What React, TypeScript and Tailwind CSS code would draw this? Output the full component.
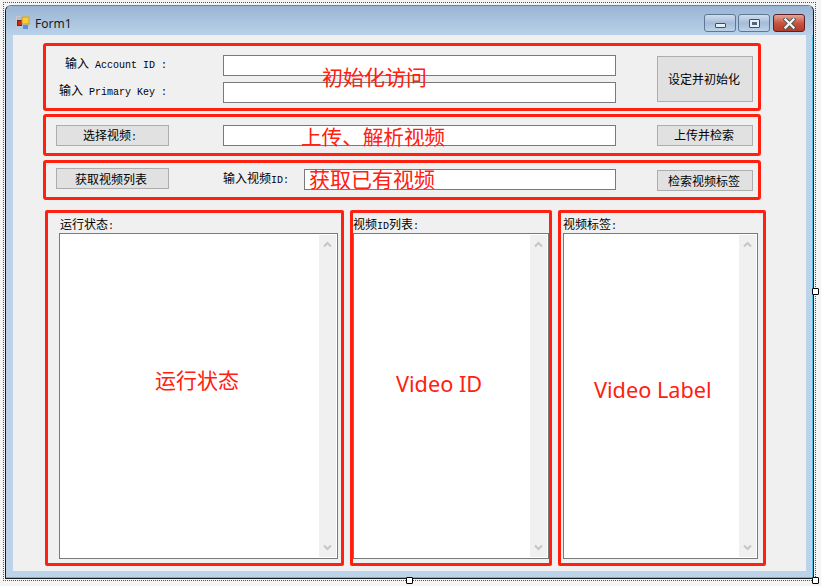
import type { ReactNode } from "react";

const uiFont = { fontFamily: '"Liberation Mono", "Noto Sans CJK SC", monospace' };

const Latin = ({ children }: { children: string }) => (
  <span className="text-[10px] whitespace-pre">{children}</span>
);

const Btn = ({ className, children }: { className: string; children: ReactNode }) => (
  <div className={`flex items-center justify-center bg-[#e1e1e1] border border-[#adadad] pt-[4px] text-[12px] text-black ${className}`}>
    {children}
  </div>
);

const Input = ({ className }: { className: string }) => (
  <div className={`bg-white border border-[#7a7a7a] ${className}`} />
);

const Chevron = ({ up }: { up?: boolean }) => (
  <svg width="9" height="7" viewBox="0 0 9 7" className="text-[#c6c6c6]">
    <path d={up ? "M1 5.5 L4.5 2 L8 5.5" : "M1 1.5 L4.5 5 L8 1.5"} fill="none" stroke="currentColor" strokeWidth="2" />
  </svg>
);

const ListBox = ({ className }: { className: string }) => (
  <div className={`flex justify-end bg-white border border-[#7a7a7a] h-[326px] py-px pr-px ${className}`}>
    <div className="flex flex-col items-center justify-between w-[17px] bg-[#f0f0f0] py-[6px]">
      <Chevron up />
      <Chevron />
    </div>
  </div>
);

const Panel = ({ title, className, titleClass, boxClass }: { title: ReactNode; className: string; titleClass?: string; boxClass: string }) => (
  <div className={`border-[3px] border-[#ff2010] rounded-[2px] h-[356px] ${className}`}>
    <div className={`h-[20px] pt-[5px] text-[12px] leading-[16px] text-black ${titleClass ?? ""}`}>{title}</div>
    <ListBox className={boxClass} />
  </div>
);

const CaptionBtn = ({ className, children }: { className: string; children: ReactNode }) => (
  <div className={`flex items-center justify-center h-[18px] w-[32px] rounded-[3px] border ${className}`}>
    {children}
  </div>
);

const Note = ({ className, children }: { className: string; children: string }) => (
  <div className={`absolute text-[#ff2010] whitespace-nowrap leading-none ${className}`} style={{ fontFamily: '"Noto Sans", "Noto Sans CJK SC", sans-serif' }}>
    {children}
  </div>
);

const Handle = ({ className }: { className: string }) => (
  <div className={`absolute w-[7px] h-[7px] bg-white border border-black rounded-[1px] ${className}`} />
);

export default function App() {
  return (
    <div className="relative w-[821px] h-[586px] bg-[#f4f4f4] pl-[5px] pt-[5px] overflow-hidden" style={uiFont}>
      {/* window */}
      <div className="flex flex-col w-[809px] h-[574px] border border-[#1c1c1c] border-t-[#6b7f96] rounded-t-[6px] bg-[#bcd3ea] shadow-[inset_-1px_-1px_0_#4cc3e8]">
        <div className="flex items-start justify-between h-[29px] rounded-t-[6px] bg-gradient-to-b from-[#9ab5d3] to-[#b9d2ea] pl-[10px] pr-[8px] pt-[8px]">
          <div className="flex items-center gap-[5px] h-[18px]">
            <svg width="14" height="14" viewBox="0 0 14 14">
              <rect x="0.5" y="0.5" width="13" height="13" fill="none" stroke="#c8c8c8" />
              <rect x="1.5" y="4.5" width="4" height="5" fill="#c22a22" stroke="#7a2020" />
              <rect x="6" y="1" width="7" height="7" fill="#f6cf3c" stroke="#c79a2a" />
              <rect x="7" y="9" width="5" height="4" fill="#5c8fe0" />
            </svg>
            <span className="pt-px text-[12px] text-[#1a1a1a]" style={{ fontFamily: '"Noto Sans", sans-serif' }}>Form1</span>
          </div>
          <div className="flex">
            <CaptionBtn className="border-[#5f7894] bg-gradient-to-b from-[#cfdeee] via-[#a4bcd8] to-[#bcd2e8]">
              <div className="w-[11px] h-[5px] mt-[4px] bg-[#e8eef5] border border-[#3f4f63] rounded-[1px]" />
            </CaptionBtn>
            <CaptionBtn className="ml-[2px] border-[#5f7894] bg-gradient-to-b from-[#cfdeee] via-[#a4bcd8] to-[#bcd2e8]">
              <div className="w-[11px] h-[9px] bg-[#e8eef5] border border-[#3f4f63] rounded-[1px] flex items-center justify-center">
                <div className="w-[5px] h-[3px] bg-[#51667f]" />
              </div>
            </CaptionBtn>
            <CaptionBtn className="ml-[3px] border-[#5c1f28] bg-gradient-to-b from-[#e3a598] via-[#c9543f] to-[#b23a2a]">
              <svg width="13" height="11" viewBox="0 0 13 11">
                <path d="M2.5 1.5 L10.5 9.5 M10.5 1.5 L2.5 9.5" stroke="#4a4a4a" strokeWidth="4" strokeLinecap="square" />
                <path d="M2.5 1.5 L10.5 9.5 M10.5 1.5 L2.5 9.5" stroke="#f4f4f4" strokeWidth="2.4" strokeLinecap="square" />
              </svg>
            </CaptionBtn>
          </div>
        </div>

        {/* client area */}
        <div className="ml-[7px] w-[793px] h-[536px] bg-[#f0f0f0] pt-[8px] pl-[30px]">
          <div className="flex w-[718px] h-[68px] border-[3px] border-[#ff2010] rounded-[3px]">
            <div className="flex flex-col w-[177px] pt-[11px] text-[12px] leading-[16px] text-black">
              <div className="pl-[19px] whitespace-pre">输入<Latin> Account ID :</Latin></div>
              <div className="pl-[13px] mt-[10px] whitespace-pre">输入<Latin> Primary Key :</Latin></div>
            </div>
            <div className="flex flex-col gap-[6px] pt-[9px]">
              <Input className="w-[393px] h-[21px]" />
              <Input className="w-[393px] h-[21px]" />
            </div>
            <Btn className="ml-[41px] mt-[10px] w-[96px] h-[46px] pr-[2px]">设定并初始化</Btn>
          </div>

          <div className="flex items-center w-[718px] h-[42px] mt-[3px] border-[3px] border-[#ff2010] rounded-[3px]">
            <Btn className="ml-[10px] w-[113px] h-[21px] pr-[5px]">选择视频<Latin>:</Latin></Btn>
            <Input className="ml-[54px] w-[393px] h-[21px]" />
            <Btn className="ml-[41px] w-[96px] h-[21px] pr-[2px]">上传并检索</Btn>
          </div>

          <div className="flex items-start w-[718px] h-[40px] mt-[4px] border-[3px] border-[#ff2010] rounded-[3px]">
            <Btn className="ml-[10px] mt-[5px] w-[113px] h-[21px] pr-[3px]">获取视频列表</Btn>
            <div className="ml-[54px] mt-[9px] w-[81px] text-[12px] leading-[16px] text-black whitespace-pre">输入视频<Latin>ID:</Latin></div>
            <Input className="mt-[6px] w-[312px] h-[21px]" />
            <Btn className="ml-[41px] mt-[7px] w-[96px] h-[21px] pr-[2px]">检索视频标签</Btn>
          </div>

          <div className="flex ml-[2px] mt-[10px]">
            <Panel title={<>运行状态<Latin>:</Latin></>} titleClass="pl-px" className="w-[299px] pl-[11px]" boxClass="w-[279px]" />
            <Panel title={<>视频<Latin>ID</Latin>列表<Latin>:</Latin></>} className="ml-[6px] w-[202px] pl-0" boxClass="w-[196px]" />
            <Panel title={<>视频标签<Latin>:</Latin></>} className="ml-[6px] w-[208px] pl-[2px]" boxClass="w-[195px]" />
          </div>
        </div>
      </div>

      {/* annotations over the form */}
      <Note className="left-[322px] top-[67px] text-[21px]">初始化访问</Note>
      <Note className="left-[301px] top-[127px] text-[20.6px]">上传、解析视频</Note>
      <Note className="left-[309px] top-[169px] text-[21px]">获取已有视频</Note>
      <Note className="left-[155px] top-[370px] text-[21px]">运行状态</Note>
      <Note className="left-[396px] top-[373px] text-[21.7px]">Video ID</Note>
      <Note className="left-[594px] top-[379px] text-[21.7px]">Video Label</Note>

      {/* designer selection frame */}
      <div className="absolute left-[3px] top-[2px] w-[813px] h-[579px] border border-dotted border-[#555]" />
      <Handle className="left-[812px] top-[288px]" />
      <Handle className="left-[406px] top-[577px]" />
      <Handle className="left-[812px] top-[577px]" />
    </div>
  );
}
